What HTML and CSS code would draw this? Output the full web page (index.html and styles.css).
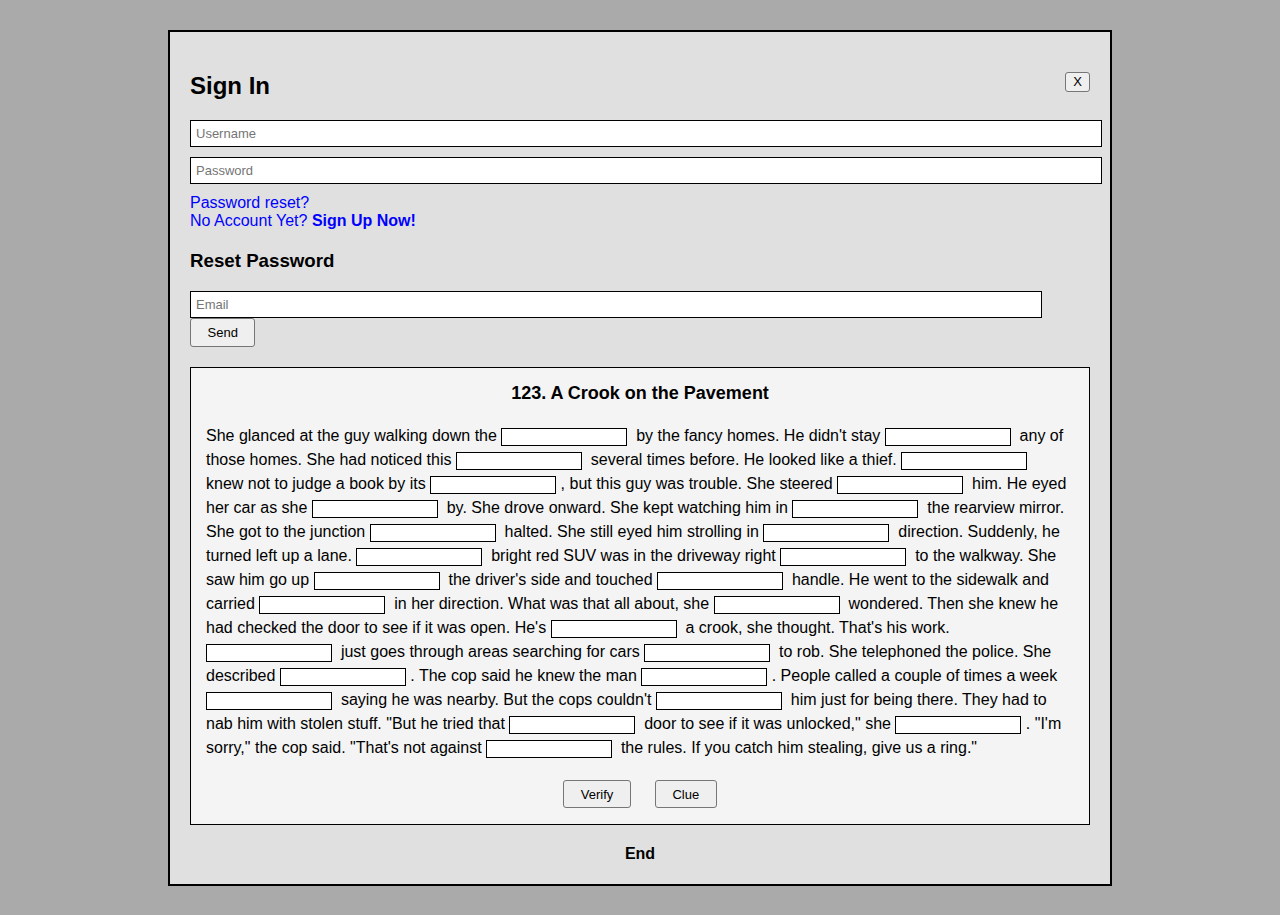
FILE: index.html
```html
<!DOCTYPE html>
<html lang="en">
<head>
<meta charset="utf-8">
<title>Sign In</title>
<link rel="stylesheet" href="styles.css">
</head>
<body>
<div class="modal">
  <div class="modal-header">
    <h2 class="title">Sign In</h2>
    <button class="btn close-btn" type="button">X</button>
  </div>
  <input class="field" type="text" placeholder="Username">
  <input class="field field-gap" type="password" placeholder="Password">
  <div class="links">
    <a class="link" href="#">Password reset?</a><br>
    <a class="link" href="#">No Account Yet? <b>Sign Up Now!</b></a>
  </div>
  <h3 class="subtitle">Reset Password</h3>
  <input class="field email" type="email" placeholder="Email">
  <div><button class="btn send-btn" type="button">Send</button></div>

  <div class="puzzle">
    <div class="puzzle-title">123. A Crook on the Pavement</div>
    <p class="story">She glanced at the guy walking down the <input class="blank" type="text">&nbsp; by the fancy homes. He didn't stay <input class="blank" type="text">&nbsp; any of those homes. She had noticed this <input class="blank" type="text">&nbsp; several times before. He looked like a thief. <input class="blank" type="text">&nbsp; knew not to judge a book by its <input class="blank" type="text"> , but this guy was trouble. She steered <input class="blank" type="text">&nbsp; him. He eyed her car as she <input class="blank" type="text">&nbsp; by. She drove onward. She kept watching him in <input class="blank" type="text">&nbsp; the rearview mirror. She got to the junction <input class="blank" type="text">&nbsp; halted. She still eyed him strolling in <input class="blank" type="text">&nbsp; direction. Suddenly, he turned left up a lane. <input class="blank" type="text">&nbsp; bright red SUV was in the driveway right <input class="blank" type="text">&nbsp; to the walkway. She saw him go up <input class="blank" type="text">&nbsp; the driver's side and touched <input class="blank" type="text">&nbsp; handle. He went to the sidewalk and carried <input class="blank" type="text">&nbsp; in her direction. What was that all about, she <input class="blank" type="text">&nbsp; wondered. Then she knew he had checked the door to see if it was open. He's <input class="blank" type="text">&nbsp; a crook, she thought. That's his work. <input class="blank" type="text">&nbsp; just goes through areas searching for cars <input class="blank" type="text">&nbsp; to rob. She telephoned the police. She described <input class="blank" type="text"> . The cop said he knew the man <input class="blank" type="text"> . People called a couple of times a week <input class="blank" type="text">&nbsp; saying he was nearby. But the cops couldn't <input class="blank" type="text">&nbsp; him just for being there. They had to nab him with stolen stuff. "But he tried that <input class="blank" type="text">&nbsp; door to see if it was unlocked," she <input class="blank" type="text"> . "I'm sorry," the cop said. "That's not against <input class="blank" type="text">&nbsp; the rules. If you catch him stealing, give us a ring."</p>
    <div class="actions">
      <button class="btn action-btn" type="button">Verify</button>
      <button class="btn action-btn" type="button">Clue</button>
    </div>
  </div>

  <div class="end">End</div>
</div>
</body>
</html>
```

FILE: styles.css
```css
html, body {
  margin: 0;
  padding: 0;
}

body {
  background: #aaaaaa;
  font-family: "Liberation Sans", Arial, sans-serif;
  font-size: 16px;
  color: #000;
}

.modal {
  width: 900px;
  margin: 30px auto 0;
  padding: 20px 20px 21px;
  background: #e0e0e0;
  border: 2px solid #000;
}

.modal-header {
  display: flex;
  justify-content: space-between;
  align-items: flex-start;
  margin: 20px 0 20px;
}

.title {
  margin: 0;
  font-size: 24px;
  line-height: 28px;
  font-weight: bold;
}

.btn {
  font-family: "Liberation Sans", Arial, sans-serif;
  font-size: 13px;
  color: #000;
  background: #efefef;
  border: 1px solid #767676;
  border-radius: 3px;
  margin: 0;
  cursor: pointer;
}

.close-btn {
  height: 20px;
  padding: 0 7px;
  line-height: 16px;
}

.field {
  display: block;
  width: 100%;
  box-sizing: content-box;
  margin: 0;
  padding: 5px;
  height: 15px;
  line-height: 15px;
  border: 1px solid #000;
  background: #fff;
  font-family: "Liberation Sans", Arial, sans-serif;
  font-size: 13px;
  border-radius: 0;
  outline: none;
}

.field::placeholder {
  color: #757575;
}

.field-gap {
  margin-top: 10px;
}

.links {
  margin-top: 10px;
  line-height: 18px;
}

.link {
  color: #0000ff;
  text-decoration: none;
}

.subtitle {
  margin: 21px 0 20px;
  font-size: 18.72px;
  line-height: 20px;
  font-weight: bold;
}

.email {
  width: 840px;
}

.send-btn {
  display: block;
  height: 29px;
  padding: 0 16.5px;
}

.puzzle {
  margin-top: 20px;
  background: #f4f4f4;
  border: 1px solid #000;
  padding: 15px 17px 16px 15px;
}

.puzzle-title {
  text-align: center;
  font-weight: bold;
  font-size: 18px;
  line-height: 21px;
  margin-bottom: 20px;
  margin-right: -2px;
}

.story {
  margin: 0;
  line-height: 24px;
}

.blank {
  box-sizing: content-box;
  width: 124px;
  height: 16px;
  padding: 0;
  margin: 0;
  border: 1px solid #000;
  background: #fff;
  vertical-align: middle;
  font-family: "Liberation Sans", Arial, sans-serif;
  font-size: 13px;
  border-radius: 0;
}

.actions {
  display: flex;
  justify-content: center;
  gap: 24px;
  margin-top: 20px;
  margin-right: -2px;
}

.action-btn {
  height: 28px;
  padding: 0 16.5px;
}

.end {
  margin-top: 20px;
  text-align: center;
  font-weight: bold;
  line-height: 18px;
}
```
